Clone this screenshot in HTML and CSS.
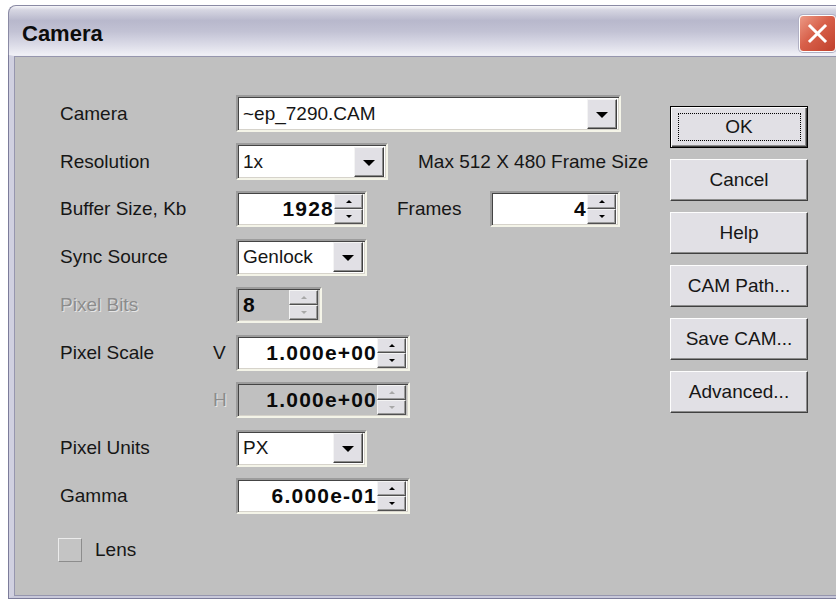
FILE: index.html
```html
<!DOCTYPE html>
<html>
<head>
<meta charset="utf-8">
<title>Camera</title>
<link rel="stylesheet" href="styles.css">
</head>
<body>
<div class="window">
  <div class="titlebar">
    <span class="title">Camera</span>
    <span class="close">
      <svg width="23" height="23" viewBox="0 0 23 23"><path d="M4 4 L19 19 M19 4 L4 19" stroke="#fff" stroke-width="3" stroke-linecap="square" fill="none"/></svg>
    </span>
  </div>
  <div class="body">
    <div class="frame">
      <div class="client">
        <div class="form">
          <div class="row">
            <span class="label">Camera</span><span class="sub"></span>
            <div class="ctrls">
              <div class="combo w-cam"><span class="val">~ep_7290.CAM</span><span class="drop"><i class="tri"></i></span></div>
            </div>
          </div>
          <div class="row">
            <span class="label">Resolution</span><span class="sub"></span>
            <div class="ctrls">
              <div class="combo w-res"><span class="val">1x</span><span class="drop"><i class="tri"></i></span></div>
              <span class="note">Max 512 X 480 Frame Size</span>
            </div>
          </div>
          <div class="row">
            <span class="label">Buffer Size, Kb</span><span class="sub"></span>
            <div class="ctrls">
              <div class="edit w-buf"><span class="num">1928</span><span class="spin"><b><i class="up"></i></b><b><i class="dn"></i></b></span></div>
              <span class="frames">Frames</span>
              <div class="edit w-frm"><span class="num">4</span><span class="spin"><b><i class="up"></i></b><b><i class="dn"></i></b></span></div>
            </div>
          </div>
          <div class="row">
            <span class="label">Sync Source</span><span class="sub"></span>
            <div class="ctrls">
              <div class="combo w-sm"><span class="val">Genlock</span><span class="drop"><i class="tri"></i></span></div>
            </div>
          </div>
          <div class="row">
            <span class="label off">Pixel Bits</span><span class="sub"></span>
            <div class="ctrls">
              <div class="edit w-bits dis"><span class="num left">8</span><span class="spin"><b><i class="up"></i></b><b><i class="dn"></i></b></span></div>
            </div>
          </div>
          <div class="row">
            <span class="label">Pixel Scale</span><span class="sub">V</span>
            <div class="ctrls">
              <div class="edit w-sc"><span class="num">1.000e+00</span><span class="spin"><b><i class="up"></i></b><b><i class="dn"></i></b></span></div>
            </div>
          </div>
          <div class="row">
            <span class="label"></span><span class="sub off">H</span>
            <div class="ctrls">
              <div class="edit w-sc dis"><span class="num">1.000e+00</span><span class="spin"><b><i class="up"></i></b><b><i class="dn"></i></b></span></div>
            </div>
          </div>
          <div class="row">
            <span class="label">Pixel Units</span><span class="sub"></span>
            <div class="ctrls">
              <div class="combo w-sm"><span class="val">PX</span><span class="drop"><i class="tri"></i></span></div>
            </div>
          </div>
          <div class="row">
            <span class="label">Gamma</span><span class="sub"></span>
            <div class="ctrls">
              <div class="edit w-sc"><span class="num">6.000e-01</span><span class="spin"><b><i class="up"></i></b><b><i class="dn"></i></b></span></div>
            </div>
          </div>
          <div class="lens">
            <span class="check"></span><span class="lens-label">Lens</span>
          </div>
        </div>
        <div class="buttons">
          <div class="btn default">OK</div>
          <div class="btn">Cancel</div>
          <div class="btn">Help</div>
          <div class="btn">CAM Path...</div>
          <div class="btn">Save CAM...</div>
          <div class="btn">Advanced...</div>
        </div>
      </div>
    </div>
  </div>
</div>
</body>
</html>
```
FILE: styles.css
```css
* { box-sizing: border-box; }

html, body {
  margin: 0;
  padding: 0;
  background: #fff;
  overflow: hidden;
}

body {
  width: 836px;
  height: 599px;
  font-family: "Liberation Sans", Arial, sans-serif;
  font-size: 19px;
  color: #161616;
}

/* dialog window */
.window {
  margin: 5px 0 0 8px;
  width: 828px;
  height: 594px;
  display: flex;
  flex-direction: column;
}

.titlebar {
  flex: none;
  height: 50px;
  display: flex;
  justify-content: space-between;
  align-items: flex-start;
  border-top: 1px solid #8a8aa4;
  border-left: 1px solid #8a8aa4;
  border-radius: 8px 0 0 0;
  background: linear-gradient(180deg, #f6f6fa 0%, #d6d6e2 8%, #b8b8cc 30%, #c2c2d4 52%, #dcdce8 80%, #f0f0f6 100%);
}

.title {
  margin: 17px 0 0 13px;
  font-size: 22px;
  line-height: 22px;
  font-weight: bold;
  color: #0c0c0c;
}

.close {
  margin-top: 9px;
  width: 37px;
  height: 37px;
  display: flex;
  align-items: center;
  justify-content: center;
  border: 1px solid #fff;
  border-radius: 4px;
  background: linear-gradient(135deg, #ec9a86 0%, #d8604a 45%, #c0402c 100%);
  box-shadow: 0 0 0 1px #b0b0c4;
}

.body {
  flex: 1;
  display: flex;
  border-left: 1px solid #7c7c9a;
  border-bottom: 1px solid #7c7c9a;
}

.frame {
  flex: 1;
  display: flex;
  border-top: 1px solid #eeeef4;
  border-left: 5px solid #d0d0e0;
  border-bottom: 2px solid #c8c8da;
}

.client {
  flex: 1;
  display: flex;
  background: #c0c0c0;
  border-top: 1px solid #9696ae;
  border-left: 1px solid #9696ae;
  border-bottom: 1px solid #9696ae;
}

/* left form */
.form {
  flex: none;
  width: 655px;
  padding: 33px 0 0 45px;
}

.row {
  height: 47.75px;
  display: flex;
  align-items: center;
}

.label {
  flex: none;
  width: 153px;
  white-space: nowrap;
}

.sub {
  flex: none;
  width: 23px;
}

.off {
  color: #8c8c8c;
  text-shadow: 1px 1px 0 #e6e6e6;
}

.ctrls {
  display: flex;
  align-items: center;
}

/* sunken field shared by combos and edits */
.combo,
.edit {
  display: flex;
  align-items: center;
  background: #fff;
  border: 2px solid;
  border-color: #9c9c9c #f4f4e8 #f4f4e8 #9c9c9c;
  box-shadow: inset 1px 1px 0 #444, inset -1px -1px 0 #d6d3cb;
}

.combo {
  height: 37px;
  padding: 0 2px 0 5px;
}

.edit {
  height: 36px;
  padding: 0 2px 0 5px;
}

.edit.dis {
  background: #c0c0c0;
}

.val {
  flex: 1;
  white-space: nowrap;
}

.num {
  flex: 1;
  text-align: right;
  font-weight: bold;
  font-size: 21px;
  letter-spacing: 1.2px;
  white-space: nowrap;
  color: #0a0a0a;
}

.num.left {
  text-align: left;
}

.w-cam { width: 385px; }
.w-res { width: 152px; }
.w-sm { width: 131px; }
.w-buf { width: 131px; }
.w-frm { width: 130px; }
.w-bits { width: 86px; }
.w-sc { width: 174px; }

.note {
  margin-left: 30px;
  white-space: nowrap;
}

.frames {
  margin-left: 30px;
  width: 93px;
}

/* drop-down button */
.drop {
  flex: none;
  width: 30px;
  height: 30px;
  display: flex;
  align-items: center;
  justify-content: center;
  background: #e1e0e5;
  border: 1px solid;
  border-color: #f4f4f4 #404040 #404040 #f4f4f4;
  box-shadow: inset -1px -1px 0 #8c8c8c;
}

.tri {
  width: 0;
  height: 0;
  border-left: 6px solid transparent;
  border-right: 6px solid transparent;
  border-top: 6px solid #000;
  margin-top: 2px;
}

/* up/down spinner */
.spin {
  flex: none;
  width: 29px;
  height: 30px;
  display: flex;
  flex-direction: column;
}

.spin b {
  flex: 1;
  display: flex;
  align-items: center;
  justify-content: center;
  background: #e1e0e5;
  border: 1px solid;
  border-color: #f4f4f4 #505050 #505050 #f4f4f4;
  box-shadow: inset -1px -1px 0 #9a9a9a;
}

.up,
.dn {
  width: 0;
  height: 0;
  border-left: 3px solid transparent;
  border-right: 3px solid transparent;
}

.up { border-bottom: 3px solid #000; }
.dn { border-top: 3px solid #000; }

.dis .up { border-bottom-color: #a8a8a8; }
.dis .dn { border-top-color: #a8a8a8; }

/* lens checkbox */
.lens {
  margin: 6px 0 0 -2px;
  height: 48px;
  display: flex;
  align-items: center;
}

.check {
  width: 24px;
  height: 24px;
  background: #c4c4c4;
  border: 1px solid;
  border-color: #ececec #8c8c8c #8c8c8c #ececec;
}

.lens-label {
  margin-left: 13px;
}

/* command buttons */
.buttons {
  flex: none;
  width: 138px;
  margin-top: 49px;
  display: flex;
  flex-direction: column;
  gap: 11px;
}

.btn {
  position: relative;
  height: 42px;
  display: flex;
  align-items: center;
  justify-content: center;
  background: #e1e0e5;
  border: 1px solid;
  border-color: #fdfdfd #404040 #404040 #fdfdfd;
  box-shadow: inset -1px -1px 0 #8c8c8c;
  white-space: nowrap;
}

.btn.default {
  border: 1px solid #000;
  box-shadow: inset 1px 1px 0 #fdfdfd, inset -1px -1px 0 #404040, inset -2px -2px 0 #8c8c8c;
}

.btn.default::after {
  content: "";
  position: absolute;
  left: 7px;
  right: 6px;
  top: 6px;
  bottom: 6px;
  border: 1px dotted #000;
}
```
